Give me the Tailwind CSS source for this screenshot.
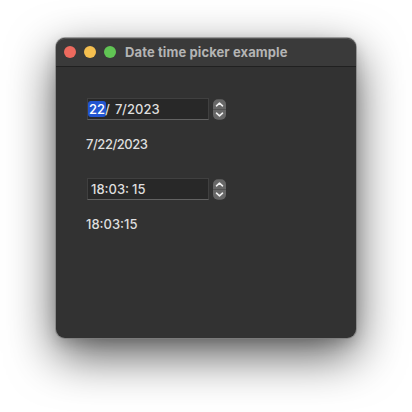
<!DOCTYPE html>
<html lang="en">
<head>
<meta charset="utf-8">
<title>Date time picker example</title>
<script src="https://cdn.jsdelivr.net/npm/@tailwindcss/browser@4"></script>
</head>
<body class="w-[412px] h-[412px] overflow-hidden bg-white pt-[38px] pl-[56px] font-[Inter,sans-serif] text-[13px] leading-4 text-[#dedede]">
<main class="w-[300px] h-[300px] rounded-[9px] bg-[#323232] overflow-hidden shadow-[0_0_0_1px_rgba(125,125,125,0.7),0_17px_48px_rgba(0,0,0,0.66),0_5px_14px_rgba(0,0,0,0.15)]">
  <header class="h-[29px] bg-[#3a3a3a] border-b border-[#202020] shadow-[inset_0_1px_0_#565656] rounded-t-[9px] flex items-center pl-2">
    <div class="flex gap-2">
      <span class="size-3 rounded-full bg-[#ed6a5e]"></span>
      <span class="size-3 rounded-full bg-[#f5bf4f]"></span>
      <span class="size-3 rounded-full bg-[#61c554]"></span>
    </div>
    <h1 class="ml-[9px] pb-px font-bold text-[#b4b4b4] whitespace-nowrap tracking-[0.11px]">Date time picker example</h1>
  </header>
  <section class="pt-[31px] pl-[30px] font-medium whitespace-nowrap">
    <div class="flex items-center gap-1 pl-px h-[22px]">
      <div class="w-[122px] h-[22px] bg-[#282828] border border-[#404040] border-b-[#626262] flex items-center">
        <span class="w-[18px] h-4 rounded-[3px] bg-[#2255d0] text-white pl-px">22</span>
        <span class="w-[10px] -ml-px">/</span>
        <span class="w-[7px]">7</span>
        <span class="w-[5px]">/</span>
        <span>2023</span>
      </div>
      <svg class="w-[13px] h-[21px]" viewBox="0 0 13 21" fill="none">
        <rect width="13" height="20.5" y=".2" rx="5" fill="#666"/>
        <path d="M0 10.5H13" stroke="#515151"/>
        <path d="M3.5 6.8 6.5 4.2 9.5 6.8M3.5 14.2 6.5 16.8 9.5 14.2" stroke="#f0f0f0" stroke-width="1.6" stroke-linecap="round" stroke-linejoin="round"/>
      </svg>
    </div>
    <p class="mt-4 h-4 tracking-[-0.45px]">7/22/2023</p>
    <div class="mt-[26px] flex items-center gap-1 pl-px h-[22px]">
      <div class="w-[122px] h-[22px] bg-[#282828] border border-[#404040] border-b-[#626262] flex items-center pl-[3px]">
        <span class="w-[41px]">18:03:</span>
        <span>15</span>
      </div>
      <svg class="w-[13px] h-[21px]" viewBox="0 0 13 21" fill="none">
        <rect width="13" height="20.5" y=".2" rx="5" fill="#666"/>
        <path d="M0 10.5H13" stroke="#515151"/>
        <path d="M3.5 6.8 6.5 4.2 9.5 6.8M3.5 14.2 6.5 16.8 9.5 14.2" stroke="#f0f0f0" stroke-width="1.6" stroke-linecap="round" stroke-linejoin="round"/>
      </svg>
    </div>
    <p class="mt-4 h-4">18:03:15</p>
  </section>
</main>
</body>
</html>
